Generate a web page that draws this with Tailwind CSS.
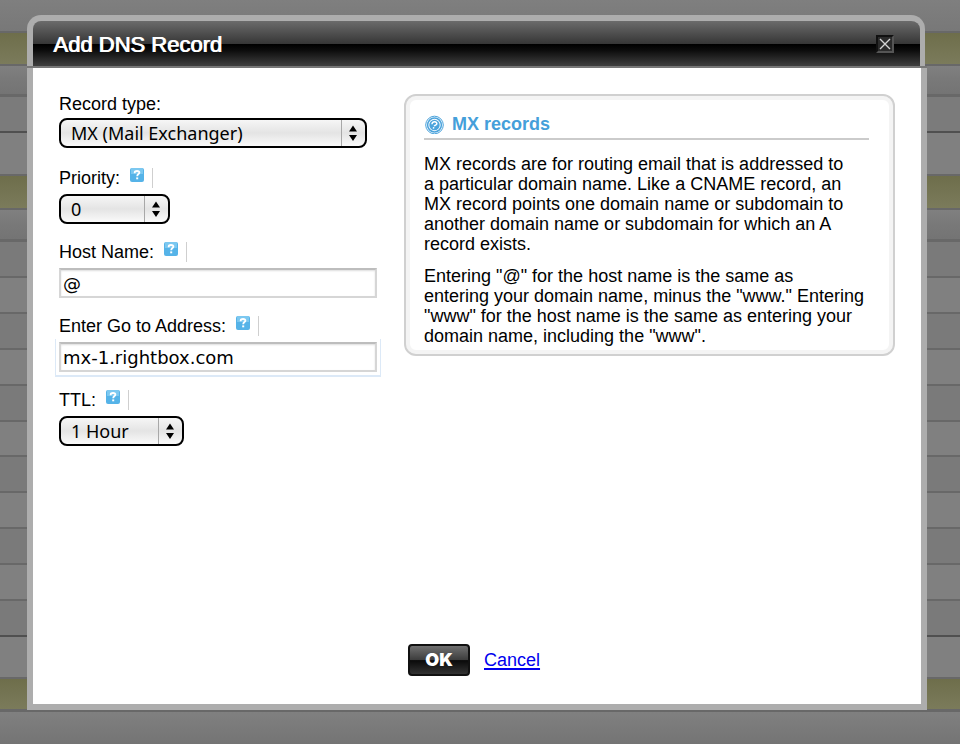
<!DOCTYPE html>
<html lang="en">
<head>
<meta charset="utf-8">
<meta name="viewport" content="width=device-width, initial-scale=1">
<title>Add DNS Record</title>
<script src="https://cdn.jsdelivr.net/npm/@tailwindcss/browser@4"></script>
</head>
<body class="relative min-h-screen bg-[#7a7a7a] font-['Liberation_Sans',Arial,sans-serif] text-lg leading-5 text-black">

<!-- Dimmed page rows behind the dialog -->
<div class="absolute inset-0 flex flex-col overflow-hidden" aria-hidden="true">
  <div class="h-[33px] shrink-0 border-b-2 border-[#686868] bg-linear-to-b from-[#7f7f7f] to-[#787878]"></div>
  <div class="h-[31px] shrink-0 bg-linear-to-b from-[#6e6e4b] to-[#7b7b5b]"></div>
  <div class="h-[33px] shrink-0 border-t-2 border-b-3 border-[#686868] bg-linear-to-b from-[#808080] from-0% via-[#797979] via-45% to-[#747474] to-100%"></div>
  <div class="h-9 shrink-0 border-b-2 border-[#505050] bg-[#7b7b7b]"></div>
  <div class="h-[43px] shrink-0 border-b-2 border-[#686868] bg-[#808080]"></div>
  <div class="h-8 shrink-0 bg-linear-to-b from-[#6e6e4b] to-[#7b7b5b]"></div>
  <div class="h-[34px] shrink-0 border-t-2 border-b-3 border-[#686868] bg-linear-to-b from-[#808080] from-0% via-[#797979] via-45% to-[#747474] to-100%"></div>
  <div class="flex h-[395px] shrink-0 flex-col">
    <div class="flex-1 border-b-2 border-[#686868] bg-[#7a7a7a]"></div>
    <div class="flex-1 border-b-2 border-[#686868] bg-[#808080]"></div>
    <div class="flex-1 border-b-2 border-[#686868] bg-[#7a7a7a]"></div>
    <div class="flex-1 border-b-2 border-[#686868] bg-[#808080]"></div>
    <div class="flex-1 border-b-2 border-[#686868] bg-[#7a7a7a]"></div>
    <div class="flex-1 border-b-2 border-[#686868] bg-[#808080]"></div>
    <div class="flex-1 border-b-2 border-[#686868] bg-[#7a7a7a]"></div>
    <div class="flex-1 border-b-2 border-[#686868] bg-[#808080]"></div>
    <div class="flex-1 border-b-2 border-[#686868] bg-[#7a7a7a]"></div>
    <div class="flex-1 border-b-2 border-[#686868] bg-[#808080]"></div>
    <div class="flex-1 border-b-2 border-[#505050] bg-[#7a7a7a]"></div>
  </div>
  <div class="h-[42px] shrink-0 border-b-2 border-[#686868] bg-[#808080]"></div>
  <div class="h-[30px] shrink-0 bg-linear-to-b from-[#6e6e4b] to-[#7b7b5b]"></div>
  <div class="h-9 grow border-t-3 border-[#686868] bg-linear-to-b from-[#808080] to-[#747474]"></div>
</div>

<main class="relative flex min-h-screen flex-col pt-[15px] pr-[33px] pb-[34px] pl-[27px]">
  <header class="mr-[2px] flex h-[51px] items-center justify-between rounded-t-[14px] border-x-6 border-t-6 border-r-5 border-[#adadad] pr-[26px] pl-5 [background-image:linear-gradient(#6b6b6b,#363636_51%,#000_52%,#0c0c0c_65%,#404040)]">
    <h1 class="pt-[2px] text-[22px] leading-6 text-white [text-shadow:1px_0_0_#fff]">Add DNS Record</h1>
    <button type="button" aria-label="Close" class="flex size-[18px] items-center justify-center border-2 border-t-[#111] border-r-[#555] border-b-[#555] border-l-[#111] bg-[#2b2b2b]">
      <svg class="size-3 shrink-0" viewBox="0 0 12 12" fill="none" stroke="#d4d4d4" stroke-width="1.4"><path d="M1 1l10 10M11 1L1 11"/></svg>
    </button>
  </header>
  <div class="h-[2px] bg-[#777]"></div>

  <form class="flex flex-1 flex-col border-x-6 border-b-6 border-[#adadad] bg-white pt-[26px] pr-[26px] pb-7 pl-[26px]">
    <div class="grid grid-cols-[318px_1fr] items-start gap-x-[27px]">
      <div class="flex flex-col gap-[18px]">
        <div class="pb-[2px]">
          <div class="flex pb-1"><label for="type">Record type:</label></div>
          <div class="relative w-[308px]">
            <select id="type" class="block h-[30px] w-full appearance-none rounded-lg border-2 border-black bg-linear-to-b from-[#f6f6f6] via-[#e4e4e4] to-[#fafafa] pr-7 pl-[10px] font-['Noto_Sans',sans-serif] text-lg leading-6"><option>MX (Mail Exchanger)</option></select>
            <svg class="pointer-events-none absolute top-[2px] right-[2px] h-[26px] w-6" viewBox="0 0 24 26"><path d="M.5 0v26" stroke="#a8a8a8"/><path d="M8 11.500l4-6 4 6zM8 15l4 6 4-6z"/></svg>
          </div>
        </div>

        <div>
          <div class="flex gap-[10px] pb-[6px]">
            <label for="priority">Priority:</label>
            <button type="button" aria-label="Help with priority" class="flex h-5 items-start gap-2"><svg class="size-[14px]" viewBox="0 0 14 14"><rect width="14" height="14" rx="2" fill="#55b3e8"/><path d="M1 0h12v6H1z" fill="#7cc8f0"/><path d="M4.700 5.200V4.500C4.700 3.500 5.500 3 7 3s2.400.600 2.400 1.700C9.400 6.200 7.200 6 7.200 8.300" fill="none" stroke="#fff" stroke-width="1.800"/><path d="M6.200 9.400h2v1.900h-2z" fill="#fff"/></svg><span class="h-5 w-px bg-[#cfcfcf]"></span></button>
          </div>
          <div class="relative w-[111px]">
            <select id="priority" class="block h-[30px] w-full appearance-none rounded-lg border-2 border-black bg-linear-to-b from-[#f6f6f6] via-[#e4e4e4] to-[#fafafa] pr-7 pl-[10px] font-['Noto_Sans',sans-serif] text-lg leading-6"><option>0</option></select>
            <svg class="pointer-events-none absolute top-[2px] right-[2px] h-[26px] w-6" viewBox="0 0 24 26"><path d="M.5 0v26" stroke="#a8a8a8"/><path d="M8 11.500l4-6 4 6zM8 15l4 6 4-6z"/></svg>
          </div>
        </div>

        <div>
          <div class="flex gap-[10px] pb-[6px]">
            <label for="host">Host Name:</label>
            <button type="button" aria-label="Help with host name" class="flex h-5 items-start gap-2"><svg class="size-[14px]" viewBox="0 0 14 14"><rect width="14" height="14" rx="2" fill="#55b3e8"/><path d="M1 0h12v6H1z" fill="#7cc8f0"/><path d="M4.700 5.200V4.500C4.700 3.500 5.500 3 7 3s2.400.600 2.400 1.700C9.400 6.200 7.200 6 7.200 8.300" fill="none" stroke="#fff" stroke-width="1.800"/><path d="M6.200 9.400h2v1.900h-2z" fill="#fff"/></svg><span class="h-5 w-px bg-[#cfcfcf]"></span></button>
          </div>
          <input id="host" type="text" value="@" class="block h-[30px] w-full border-2 border-[#d6d6d6] border-t-[#bdbdbd] bg-white px-[2px] font-['DejaVu_Sans',sans-serif] text-lg leading-6 shadow-[inset_0_1px_2px_#ddd] outline-none">
        </div>

        <div>
          <div class="flex gap-[10px] pb-[6px]">
            <label for="address">Enter Go to Address:</label>
            <button type="button" aria-label="Help with address" class="flex h-5 items-start gap-2"><svg class="size-[14px]" viewBox="0 0 14 14"><rect width="14" height="14" rx="2" fill="#55b3e8"/><path d="M1 0h12v6H1z" fill="#7cc8f0"/><path d="M4.700 5.200V4.500C4.700 3.500 5.500 3 7 3s2.400.600 2.400 1.700C9.400 6.200 7.200 6 7.200 8.300" fill="none" stroke="#fff" stroke-width="1.800"/><path d="M6.200 9.400h2v1.900h-2z" fill="#fff"/></svg><span class="h-5 w-px bg-[#cfcfcf]"></span></button>
          </div>
          <input id="address" type="text" value="mx-1.rightbox.com" class="block h-[30px] w-full border-2 border-[#d6d6d6] border-t-[#bdbdbd] bg-white px-[2px] font-['DejaVu_Sans',sans-serif] text-lg leading-6 shadow-[inset_0_1px_2px_#ddd,0_0_0_3px_#fff,0_1px_0_4px_#dce9f7] outline-none">
        </div>

        <div>
          <div class="flex gap-[10px] pb-[6px]">
            <label for="ttl">TTL:</label>
            <button type="button" aria-label="Help with TTL" class="flex h-5 items-start gap-2"><svg class="size-[14px]" viewBox="0 0 14 14"><rect width="14" height="14" rx="2" fill="#55b3e8"/><path d="M1 0h12v6H1z" fill="#7cc8f0"/><path d="M4.700 5.200V4.500C4.700 3.500 5.500 3 7 3s2.400.600 2.400 1.700C9.400 6.200 7.200 6 7.200 8.300" fill="none" stroke="#fff" stroke-width="1.800"/><path d="M6.200 9.400h2v1.900h-2z" fill="#fff"/></svg><span class="h-5 w-px bg-[#cfcfcf]"></span></button>
          </div>
          <div class="relative w-[125px]">
            <select id="ttl" class="block h-[30px] w-full appearance-none rounded-lg border-2 border-black bg-linear-to-b from-[#f6f6f6] via-[#e4e4e4] to-[#fafafa] pr-7 pl-[10px] font-['Noto_Sans',sans-serif] text-lg leading-6"><option>1 Hour</option></select>
            <svg class="pointer-events-none absolute top-[2px] right-[2px] h-[26px] w-6" viewBox="0 0 24 26"><path d="M.5 0v26" stroke="#a8a8a8"/><path d="M8 11.500l4-6 4 6zM8 15l4 6 4-6z"/></svg>
          </div>
        </div>
      </div>

      <section class="rounded-xl border-2 border-[#d0d0d0] px-[18px] pt-[18px] pb-2 shadow-[inset_0_0_0_4px_#f4f4f4]">
        <div class="mr-[6px] flex items-center gap-2 border-b-2 border-[#cbcbcb] pb-1">
          <svg class="size-5" viewBox="0 0 20 20" fill="none" stroke="#4ba3dc"><circle cx="10.500" cy="11" r="8.800"/><circle cx="10.500" cy="11" r="6.900" stroke-width="1.500"/><circle cx="10.500" cy="11" r="5.200" fill="#4ba3dc" stroke="none"/><path d="M8 10.200C8 8.600 9.200 7.700 10.700 7.800c1.500.1 2.300 1 2.100 2-.2 1.400-2.200 1.300-2.600 2.500M9.700 13.200l-.3 1.500" stroke="#fff" stroke-width="1.500"/></svg>
          <h2 class="font-bold text-[#459fda]">MX records</h2>
        </div>
        <p class="pt-[14px]">MX records are for routing email that is addressed to<br>a particular domain name. Like a CNAME record, an<br>MX record points one domain name or subdomain to<br>another domain name or subdomain for which an A<br>record exists.</p>
        <p class="pt-3">Entering "@" for the host name is the same as<br>entering your domain name, minus the "www." Entering<br>"www" for the host name is the same as entering your<br>domain name, including the "www".</p>
      </section>
    </div>

    <div class="mt-auto flex items-center gap-[14px] pl-[349px]">
      <button type="submit" class="h-8 w-[62px] rounded-sm border-2 border-[#111] font-['Inter',sans-serif] text-lg leading-6 font-black text-white [background-image:linear-gradient(#707070,#3c3c3c_50%,#0a0a0a_52%,#333)]">OK</button>
      <a href="#" class="text-[#0000ee] underline decoration-2 underline-offset-2">Cancel</a>
    </div>
  </form>
</main>
</body>
</html>
